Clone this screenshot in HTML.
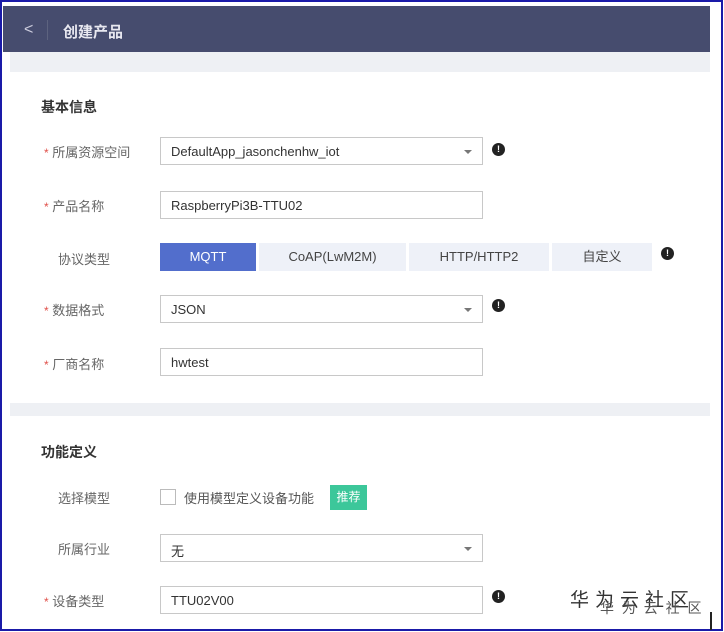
<!DOCTYPE html><html><head><meta charset="utf-8"><style>
*{margin:0;padding:0;box-sizing:border-box}
body{width:724px;height:632px;background:#fff;font-family:"Liberation Sans","Noto Sans CJK SC",sans-serif;position:relative;overflow:hidden;font-size:13px;color:#333}
.a{position:absolute}
.frame{left:0;top:0;width:723px;height:631px;border:2px solid #1a1aa8;border-right-width:2px}
.bar{left:3px;top:6px;width:707px;height:46px;background:#464c6e}
.gray{left:10px;top:52px;width:700px;height:20px;background:#eef0f4}
.sep{left:10px;top:403px;width:700px;height:13px;background:#eef0f4}
.lbl{color:#666;font-size:13px}
.star{color:#e0504a;font-size:12px}
.in{border:1px solid #c8c8c8;height:28px;width:323px;left:160px;padding:6px 10px;font-size:13px;color:#333;background:#fff}
.car{position:absolute;right:10px;top:12px;width:0;height:0;border-left:4px solid transparent;border-right:4px solid transparent;border-top:4px solid #777}
.i{width:13px;height:13px;border-radius:50%;background:#222;color:#fff;font-size:9px;line-height:13px;text-align:center;font-weight:bold}
.btn{top:243px;height:28px;background:#eef1f8;color:#444;font-size:13px;text-align:center;line-height:28px}
.h{font-weight:bold;font-size:14px;color:#333}
</style></head><body>
<div class="a frame"></div>
<div class="a bar"></div>
<div class="a" style="left:24px;top:21px;color:#ccd;font-size:16px">&lt;</div>
<div class="a" style="left:47px;top:20px;width:1px;height:20px;background:#5d637f"></div>
<div class="a" style="left:63px;top:21px;color:#e8e8f0;font-size:15px;font-weight:bold">创建产品</div>
<div class="a gray"></div>
<div class="a h" style="left:41px;top:97px">基本信息</div>

<div class="a lbl" style="left:44px;top:142px"><span class="star">*</span> 所属资源空间</div>
<div class="a in" style="top:137px">DefaultApp_jasonchenhw_iot<span class="car"></span></div>
<div class="a i" style="left:492px;top:143px">!</div>

<div class="a lbl" style="left:44px;top:196px"><span class="star">*</span> 产品名称</div>
<div class="a in" style="top:191px">RaspberryPi3B-TTU02</div>

<div class="a lbl" style="left:58px;top:249px">协议类型</div>
<div class="a btn" style="left:160px;width:96px;background:#526ecc;color:#fff">MQTT</div>
<div class="a btn" style="left:259px;width:147px">CoAP(LwM2M)</div>
<div class="a btn" style="left:409px;width:140px">HTTP/HTTP2</div>
<div class="a btn" style="left:552px;width:100px">自定义</div>
<div class="a i" style="left:661px;top:247px">!</div>

<div class="a lbl" style="left:44px;top:300px"><span class="star">*</span> 数据格式</div>
<div class="a in" style="top:295px">JSON<span class="car"></span></div>
<div class="a i" style="left:492px;top:299px">!</div>

<div class="a lbl" style="left:44px;top:354px"><span class="star">*</span> 厂商名称</div>
<div class="a in" style="top:348px">hwtest</div>

<div class="a sep"></div>
<div class="a h" style="left:41px;top:442px">功能定义</div>

<div class="a lbl" style="left:58px;top:488px">选择模型</div>
<div class="a" style="left:160px;top:489px;width:16px;height:16px;border:1px solid #bbb"></div>
<div class="a lbl" style="left:184px;top:488px;color:#555">使用模型定义设备功能</div>
<div class="a" style="left:330px;top:485px;width:37px;height:25px;background:#3cc79a;color:#fff;font-size:12px;text-align:center;line-height:25px">推荐</div>

<div class="a lbl" style="left:58px;top:539px">所属行业</div>
<div class="a in" style="top:534px">无<span class="car"></span></div>

<div class="a lbl" style="left:44px;top:591px"><span class="star">*</span> 设备类型</div>
<div class="a in" style="top:586px">TTU02V00</div>
<div class="a i" style="left:492px;top:590px">!</div>

<div class="a" style="left:570px;top:585px;font-size:19px;color:#333;letter-spacing:6px">华为云社区</div>
<div class="a" style="left:600px;top:598px;font-size:14px;color:#555;letter-spacing:2px">华 为 云 社 区</div>
<div class="a" style="left:710px;top:612px;width:2px;height:18px;background:#222"></div>
</body></html>
